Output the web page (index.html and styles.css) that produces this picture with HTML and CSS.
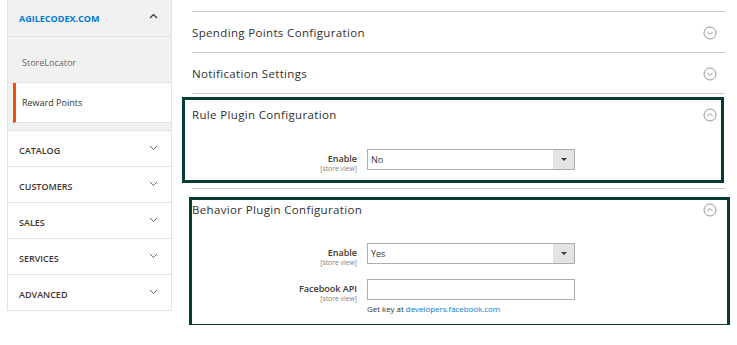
FILE: index.html
```html
<!DOCTYPE html>
<html lang="en">
<head>
  <meta charset="UTF-8">
  <meta name="viewport" content="width=device-width, initial-scale=1.0">
  <title>Configuration</title>
  <link rel="stylesheet" href="styles.css">
</head>
<body>
<div class="page">

  <!-- Menu lateral -->
  <aside class="nav">
    <div class="nav-group open">
      <div class="nav-title">
        <span>AGILECODEX.COM</span>
        <svg class="chev" width="9" height="6" viewBox="0 0 9 6"><path d="M1 5 L4.5 1.5 L8 5" fill="none" stroke="#303030" stroke-width="1.2"/></svg>
      </div>
      <ul class="nav-items">
        <li class="nav-item"><a href="#">StoreLocator</a></li>
        <li class="nav-item current"><a href="#">Reward Points</a></li>
      </ul>
    </div>
    <div class="nav-group">
      <div class="nav-title"><span>CATALOG</span><svg class="chev" width="9" height="6" viewBox="0 0 9 6"><path d="M1 1 L4.5 4.5 L8 1" fill="none" stroke="#666" stroke-width="1"/></svg></div>
    </div>
    <div class="nav-group">
      <div class="nav-title"><span>CUSTOMERS</span><svg class="chev" width="9" height="6" viewBox="0 0 9 6"><path d="M1 1 L4.5 4.5 L8 1" fill="none" stroke="#666" stroke-width="1"/></svg></div>
    </div>
    <div class="nav-group">
      <div class="nav-title"><span>SALES</span><svg class="chev" width="9" height="6" viewBox="0 0 9 6"><path d="M1 1 L4.5 4.5 L8 1" fill="none" stroke="#666" stroke-width="1"/></svg></div>
    </div>
    <div class="nav-group">
      <div class="nav-title"><span>SERVICES</span><svg class="chev" width="9" height="6" viewBox="0 0 9 6"><path d="M1 1 L4.5 4.5 L8 1" fill="none" stroke="#666" stroke-width="1"/></svg></div>
    </div>
    <div class="nav-group">
      <div class="nav-title"><span>ADVANCED</span><svg class="chev" width="9" height="6" viewBox="0 0 9 6"><path d="M1 1 L4.5 4.5 L8 1" fill="none" stroke="#666" stroke-width="1"/></svg></div>
    </div>
  </aside>

  <!-- Secoes de configuracao -->
  <main class="content">
    <div class="section">
      <div class="section-head">
        <span>Spending Points Configuration</span>
        <svg class="toggle" width="14" height="14" viewBox="0 0 14 14"><circle cx="7" cy="7" r="6" fill="none" stroke="#8a8a8a" stroke-width="0.9"/><path d="M4.3 5.8 L7 8.5 L9.7 5.8" fill="none" stroke="#8a8a8a" stroke-width="0.9"/></svg>
      </div>
    </div>

    <div class="section">
      <div class="section-head">
        <span>Notification Settings</span>
        <svg class="toggle" width="14" height="14" viewBox="0 0 14 14"><circle cx="7" cy="7" r="6" fill="none" stroke="#8a8a8a" stroke-width="0.9"/><path d="M4.3 5.8 L7 8.5 L9.7 5.8" fill="none" stroke="#8a8a8a" stroke-width="0.9"/></svg>
      </div>
    </div>

    <div class="section highlight rule">
      <div class="section-head">
        <span>Rule Plugin Configuration</span>
        <svg class="toggle" width="14" height="14" viewBox="0 0 14 14"><circle cx="7" cy="7" r="6" fill="none" stroke="#8a8a8a" stroke-width="0.9"/><path d="M4.3 8.2 L7 5.5 L9.7 8.2" fill="none" stroke="#8a8a8a" stroke-width="0.9"/></svg>
      </div>
      <div class="fieldset">
        <div class="field">
          <div class="label">Enable<small>[store view]</small></div>
          <div class="control">
            <div class="select"><span>No</span><i class="arrow"></i></div>
          </div>
        </div>
      </div>
    </div>

    <div class="section highlight behavior">
      <div class="section-head">
        <span>Behavior Plugin Configuration</span>
        <svg class="toggle" width="14" height="14" viewBox="0 0 14 14"><circle cx="7" cy="7" r="6" fill="none" stroke="#8a8a8a" stroke-width="0.9"/><path d="M4.3 8.2 L7 5.5 L9.7 8.2" fill="none" stroke="#8a8a8a" stroke-width="0.9"/></svg>
      </div>
      <div class="fieldset">
        <div class="field">
          <div class="label">Enable<small>[store view]</small></div>
          <div class="control">
            <div class="select"><span>Yes</span><i class="arrow"></i></div>
          </div>
        </div>
        <div class="field">
          <div class="label">Facebook API<small>[store view]</small></div>
          <div class="control">
            <input class="input" type="text">
            <p class="note">Get key at <a href="#">developers.facebook.com</a></p>
          </div>
        </div>
      </div>
    </div>
  </main>

</div>
</body>
</html>
```

FILE: styles.css
```css
* {
  margin: 0;
  padding: 0;
  box-sizing: border-box;
}

body {
  font-family: 'Open Sans', sans-serif;
  background-color: #fff;
  color: #303030;
}

.page {
  display: flex;
  align-items: flex-start;
}

/* menu lateral */

.nav {
  width: 165px;
  margin-left: 7px;
  border-left: 1px solid #e3e3e3;
  border-right: 1px solid #e3e3e3;
  border-bottom: 1px solid #e3e3e3;
}

.nav-group {
  border-bottom: 1px solid #e3e3e3;
}

.nav-group:last-child {
  border-bottom: none;
}

.nav-group.open {
  background-color: #f1f1f1;
  padding-bottom: 7px;
}

.nav-title {
  height: 35px;
  display: flex;
  align-items: center;
  justify-content: space-between;
  padding: 3px 13px 0 11px;
  font-size: 9px;
  font-weight: 600;
  color: #41362f;
}

.nav-title .chev {
  margin-top: -5px;
}

.nav-group.open .nav-title {
  height: 37px;
  padding-top: 0;
  color: #007bdb;
  font-weight: 700;
  border-bottom: 1px solid #e3e3e3;
}

.nav-items {
  list-style: none;
}

.nav-item {
  border-bottom: 1px solid #e3e3e3;
}

.nav-item a {
  display: block;
  text-decoration: none;
  font-size: 9px;
  color: #676767;
  padding: 6px 0 0 14px;
  height: 45px;
  line-height: 39px;
}

.nav-item.current {
  margin-left: 5px;
  border-left: 3px solid #eb5202;
  background-color: #fff;
}

.nav-item.current a {
  color: #303030;
  height: 39px;
  line-height: 39px;
  padding: 0 0 0 6px;
}

/* conteudo */

.content {
  width: 533px;
  margin-left: 20px;
  padding-top: 11px;
}

.section {
  border-top: 1px solid #cccccc;
  position: relative;
}

.section-head {
  height: 40px;
  display: flex;
  align-items: center;
  justify-content: space-between;
  padding-right: 8px;
  font-size: 11.5px;
  letter-spacing: 0.35px;
  color: #303030;
}

.section-head .toggle {
  margin-top: 1px;
}

.fieldset {
  padding: 15px 0 18px;
}

.behavior .fieldset {
  padding: 14px 0 11px;
}

.field {
  display: flex;
  align-items: flex-start;
  margin-bottom: 15px;
}

.field:last-child {
  margin-bottom: 0;
}

.label {
  width: 175px;
  height: 21px;
  padding: 4px 10px 0 0;
  text-align: right;
  font-size: 9px;
  font-weight: 600;
  color: #41362f;
  line-height: 11px;
}

.label small {
  display: block;
  font-size: 6.8px;
  font-weight: 400;
  color: #808080;
  line-height: 9px;
}

.control {
  width: 208px;
}

.select {
  height: 21px;
  border: 1px solid #adadad;
  display: flex;
  align-items: center;
  justify-content: space-between;
  font-size: 9px;
  color: #41362f;
}

.select span {
  padding-left: 3px;
}

.select .arrow {
  width: 21px;
  height: 19px;
  background-color: #e3e3e3;
  position: relative;
}

.select .arrow::after {
  content: "";
  position: absolute;
  left: 8px;
  top: 8px;
  border-left: 3px solid transparent;
  border-right: 3px solid transparent;
  border-top: 3px solid #41362f;
}

.input {
  display: block;
  width: 100%;
  height: 21px;
  border: 1px solid #adadad;
  outline: none;
}

.note {
  font-size: 7.9px;
  line-height: 10px;
  color: #303030;
  margin-top: 4px;
}

.note a {
  color: #007bdb;
  text-decoration: none;
}

/* caixas de destaque */

.highlight::after {
  content: "";
  position: absolute;
  border: 3px solid #073b38;
  pointer-events: none;
}

.highlight.rule::after {
  left: -10px;
  right: 1px;
  top: 3px;
  bottom: 5px;
}

.highlight.behavior::after {
  left: -3px;
  right: -5px;
  top: 8px;
  bottom: -2px;
}
```
